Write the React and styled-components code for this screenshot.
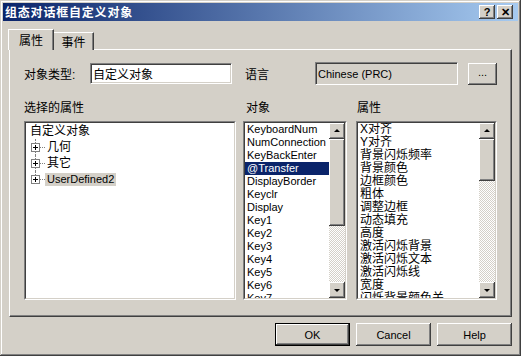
import React from 'react';
import styled, { createGlobalStyle, css } from 'styled-components';

const FONT = '"Liberation Sans", "Noto Sans CJK SC", sans-serif';
const FACE = '#D4D0C8';

const GlobalStyle = createGlobalStyle`
    html, body {
        margin: 0;
        padding: 0;
        background: ${FACE};
    }
    body {
        font-family: ${FONT};
        color: #000;
    }
    * {
        box-sizing: border-box;
    }
`;

const raised = css`
    background: ${FACE};
    box-shadow: inset -1px -1px #404040, inset 1px 1px #fff,
        inset -2px -2px #808080, inset 2px 2px ${FACE};
`;

const Window = styled.div`
    width: 521px;
    height: 356px;
    padding: 3px;
    display: flex;
    flex-direction: column;
    background: ${FACE};
    box-shadow: inset -1px -1px #404040, inset 1px 1px ${FACE},
        inset -2px -2px #808080, inset 2px 2px #fff;
`;

const TitleBar = styled.div`
    height: 18px;
    display: flex;
    align-items: center;
    justify-content: space-between;
    padding: 0 5px 0 2px;
    background: linear-gradient(to right, #0A246A, #A6CAF0);
`;

const Title = styled.span`
    color: #fff;
    font-weight: bold;
    font-size: 12px;
    letter-spacing: 0.8px;
    line-height: 18px;
    font-family: "Noto Sans CJK SC", sans-serif;
`;

const CaptionButtons = styled.div`
    display: flex;
    gap: 2px;
`;

const CaptionButton = styled.div`
    ${raised};
    width: 16px;
    height: 14px;
    display: flex;
    align-items: center;
    justify-content: center;
    font: bold 11px ${FONT};
    line-height: 14px;
`;

const Tabs = styled.div`
    display: flex;
    align-items: flex-end;
    height: 21px;
    margin: 8px 0 0 5px;
    position: relative;
    z-index: 1;
`;

const Tab = styled.div`
    width: ${p => p.$width}px;
    height: ${p => (p.$active ? 21 : 18)}px;
    display: flex;
    align-items: center;
    justify-content: center;
    padding-bottom: ${p => (p.$active ? 2 : 0)}px;
    font-size: 12px;
    background: ${FACE};
    border-top: 1px solid #fff;
    border-left: ${p => (p.$active ? '1px solid #fff' : 'none')};
    border-right: 1px solid #404040;
    box-shadow: inset -1px 0 #808080;
`;

const Panel = styled.div`
    margin: -1px 0 0 6px;
    width: 503px;
    height: 268px;
    padding: 12px 0 0 14px;
    border: 1px solid;
    border-color: #fff #404040 #404040 #fff;
    box-shadow: inset -1px -1px #808080;
`;

const FieldRow = styled.div`
    display: flex;
    align-items: center;
    height: 23px;
`;

const FieldLabel = styled.span`
    width: ${p => p.$width}px;
    margin-left: ${p => p.$offset || 0}px;
    font-size: 12px;
`;

const SunkenField = styled.div`
    width: ${p => p.$width}px;
    height: ${p => p.$height}px;
    display: flex;
    align-items: center;
    padding-left: 2px;
    font-size: ${p => (p.$latin ? 11 : 12)}px;
    background: ${p => (p.$disabled ? FACE : '#fff')};
    border: 1px solid;
    border-color: #808080 #fff #fff #808080;
    box-shadow: inset 1px 1px #404040, inset -1px -1px ${FACE};
`;

const BrowseButton = styled.div`
    ${raised};
    width: 29px;
    height: 22px;
    margin-left: 10px;
    display: flex;
    align-items: center;
    justify-content: center;
    font-size: 11px;
    padding-bottom: 3px;
`;

const Columns = styled.div`
    display: flex;
    margin-top: 16px;
`;

const Column = styled.div`
    width: ${p => p.$width}px;
    padding-right: ${p => p.$gap || 0}px;
    display: flex;
    flex-direction: column;
`;

const ColumnLabel = styled.div`
    height: 14px;
    line-height: 14px;
    font-size: 12px;
    margin-bottom: 6px;
    padding-left: ${p => p.$indent || 0}px;
`;

const ListFrame = styled.div`
    height: 179px;
    border: 1px solid;
    border-color: #808080 #fff #fff #808080;
`;

const ListBody = styled.div`
    height: 100%;
    display: flex;
    background: #fff;
    border: 1px solid;
    border-color: #404040 ${FACE} ${FACE} #404040;
`;

const ListItems = styled.div`
    flex: 1;
    overflow: hidden;
`;

const ListItem = styled.div`
    height: 13px;
    line-height: 13px;
    padding-left: 2px;
    white-space: nowrap;
    font-size: ${p => (p.$latin ? 11 : 12)}px;
    background: ${p => (p.$selected ? '#0A246A' : 'transparent')};
    color: ${p => (p.$selected ? '#fff' : '#000')};
`;

const Scrollbar = styled.div`
    width: 16px;
    display: flex;
    flex-direction: column;
`;

const ArrowButton = styled.div`
    ${raised};
    height: 16px;
    display: flex;
    align-items: center;
    justify-content: center;

    &::before {
        content: '';
        border-left: 3px solid transparent;
        border-right: 3px solid transparent;
        border-${p => (p.$down ? 'top' : 'bottom')}: 3px solid #000;
        margin-${p => (p.$down ? 'top' : 'bottom')}: 1px;
    }
`;

const Thumb = styled.div`
    ${raised};
    height: ${p => p.$height}px;
    flex-shrink: 0;
`;

const Track = styled.div`
    flex: 1;
    background: repeating-conic-gradient(#fff 0 25%, ${FACE} 0 50%) 0 0 / 2px 2px;
`;

const TreeItems = styled.div`
    flex: 1;
    padding: 0 0 0 2px;
`;

const TreeRow = styled.div`
    height: 16px;
    display: flex;
    align-items: center;
`;

const Connector = styled.div`
    width: 17px;
    height: 100%;
    position: relative;
    display: flex;
    align-items: center;

    &::before {
        content: '';
        position: absolute;
        left: 7px;
        top: 0;
        bottom: ${p => (p.$last ? '50%' : '0')};
        border-left: 1px dotted #808080;
    }

    &::after {
        content: '';
        position: absolute;
        left: 8px;
        width: 9px;
        top: 50%;
        border-top: 1px dotted #808080;
    }

    svg {
        position: relative;
        z-index: 1;
        margin-left: 3px;
    }
`;

const TreeLabel = styled.span`
    height: 13px;
    line-height: 13px;
    padding: 0 2px;
    white-space: nowrap;
    font-size: ${p => (p.$latin ? 11 : 12)}px;
    background: ${p => (p.$selected ? FACE : 'transparent')};
`;

const ButtonRow = styled.div`
    display: flex;
    justify-content: flex-end;
    gap: 6px;
    margin-top: 6px;
    padding-right: 6px;
`;

const PushButton = styled.div`
    width: 75px;
    height: 23px;
    display: flex;
    align-items: center;
    justify-content: center;
    font-size: 11px;
    background: ${FACE};
    box-shadow: ${p => (p.$default
        ? `inset 0 0 0 1px #000, inset -2px -2px #404040, inset 2px 2px #fff, inset -3px -3px #808080`
        : `inset -1px -1px #404040, inset 1px 1px #fff, inset -2px -2px #808080`)};
`;

const PlusBox = () => (
    <svg width="9" height="9" viewBox="0 0 9 9">
        <rect x="0.5" y="0.5" width="8" height="8" fill="#fff" stroke="#808080" />
        <path d="M2 4.5h5M4.5 2v5" stroke="#000" />
    </svg>
);

const objects = [
    'KeyboardNum', 'NumConnection', 'KeyBackEnter', '@Transfer', 'DisplayBorder',
    'Keyclr', 'Display', 'Key1', 'Key2', 'Key3', 'Key4', 'Key5', 'Key6', 'Key7',
];

const properties = [
    'X对齐', 'Y对齐', '背景闪烁频率', '背景颜色', '边框颜色', '粗体', '调整边框',
    '动态填充', '高度', '激活闪烁背景', '激活闪烁文本', '激活闪烁线', '宽度', '闪烁背景颜色关',
];

const treeChildren = [
    { label: '几何' },
    { label: '其它' },
    { label: 'UserDefined2', latin: true, selected: true },
];

const ScrollList = ({ items, selected, latin, thumb }) => (
    <ListFrame>
        <ListBody>
            <ListItems>
                {items.map(item => (
                    <ListItem key={item} $latin={latin} $selected={item === selected}>
                        {item}
                    </ListItem>
                ))}
            </ListItems>
            <Scrollbar>
                <ArrowButton />
                <Thumb $height={thumb} />
                <Track />
                <ArrowButton $down />
            </Scrollbar>
        </ListBody>
    </ListFrame>
);

const App = () => {
    return (
        <>
            <GlobalStyle />
            <Window>
                <TitleBar>
                    <Title>组态对话框自定义对象</Title>
                    <CaptionButtons>
                        <CaptionButton>?</CaptionButton>
                        <CaptionButton>✕</CaptionButton>
                    </CaptionButtons>
                </TitleBar>

                <Tabs>
                    <Tab $active $width={46}>属性</Tab>
                    <Tab $width={40}>事件</Tab>
                </Tabs>

                <Panel>
                    <FieldRow>
                        <FieldLabel $width={66}>对象类型:</FieldLabel>
                        <SunkenField $width={142} $height={21}>自定义对象</SunkenField>
                        <FieldLabel $width={70} $offset={13}>语言</FieldLabel>
                        <SunkenField $width={143} $height={23} $disabled $latin>Chinese (PRC)</SunkenField>
                        <BrowseButton>...</BrowseButton>
                    </FieldRow>

                    <Columns>
                        <Column $width={219} $gap={7}>
                            <ColumnLabel>选择的属性</ColumnLabel>
                            <ListFrame>
                                <ListBody>
                                    <TreeItems>
                                        <TreeRow>
                                            <TreeLabel>自定义对象</TreeLabel>
                                        </TreeRow>
                                        {treeChildren.map((child, i) => (
                                            <TreeRow key={child.label}>
                                                <Connector $last={i === treeChildren.length - 1}>
                                                    <PlusBox />
                                                </Connector>
                                                <TreeLabel $latin={child.latin} $selected={child.selected}>
                                                    {child.label}
                                                </TreeLabel>
                                            </TreeRow>
                                        ))}
                                    </TreeItems>
                                </ListBody>
                            </ListFrame>
                        </Column>

                        <Column $width={113} $gap={9}>
                            <ColumnLabel $indent={3}>对象</ColumnLabel>
                            <ScrollList items={objects} selected="@Transfer" latin thumb={87} />
                        </Column>

                        <Column $width={141}>
                            <ColumnLabel $indent={1}>属性</ColumnLabel>
                            <ScrollList items={properties} thumb={42} />
                        </Column>
                    </Columns>
                </Panel>

                <ButtonRow>
                    <PushButton $default>OK</PushButton>
                    <PushButton>Cancel</PushButton>
                    <PushButton>Help</PushButton>
                </ButtonRow>
            </Window>
        </>
    );
};

export default App;
